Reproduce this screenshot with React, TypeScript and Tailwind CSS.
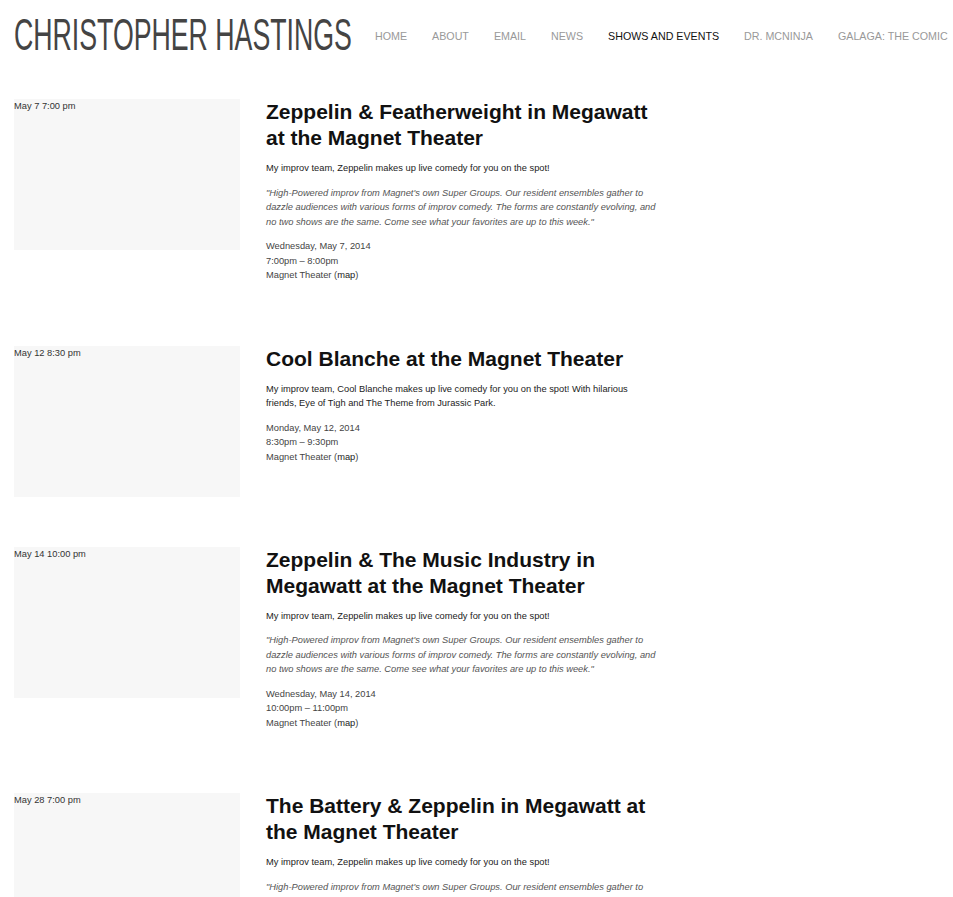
const nav = ['Home', 'About', 'Email', 'News', 'Shows and Events', 'Dr. McNinja', 'Galaga: The Comic'];

const magnetBlurb =
  '"High-Powered improv from Magnet\'s own Super Groups. Our resident ensembles gather to dazzle audiences with various forms of improv comedy. The forms are constantly evolving, and no two shows are the same. Come see what your favorites are up to this week."';

type Show = {
  when: string;
  title: string;
  blurb: string;
  quote?: string;
  day: string;
  time: string;
};

const shows: Show[] = [
  {
    when: 'May 7 7:00 pm',
    title: 'Zeppelin & Featherweight in Megawatt at the Magnet Theater',
    blurb: 'My improv team, Zeppelin makes up live comedy for you on the spot!',
    quote: magnetBlurb,
    day: 'Wednesday, May 7, 2014',
    time: '7:00pm – 8:00pm',
  },
  {
    when: 'May 12 8:30 pm',
    title: 'Cool Blanche at the Magnet Theater',
    blurb:
      'My improv team, Cool Blanche makes up live comedy for you on the spot! With hilarious friends, Eye of Tigh and The Theme from Jurassic Park.',
    day: 'Monday, May 12, 2014',
    time: '8:30pm – 9:30pm',
  },
  {
    when: 'May 14 10:00 pm',
    title: 'Zeppelin & The Music Industry in Megawatt at the Magnet Theater',
    blurb: 'My improv team, Zeppelin makes up live comedy for you on the spot!',
    quote: magnetBlurb,
    day: 'Wednesday, May 14, 2014',
    time: '10:00pm – 11:00pm',
  },
  {
    when: 'May 28 7:00 pm',
    title: 'The Battery & Zeppelin in Megawatt at the Magnet Theater',
    blurb: 'My improv team, Zeppelin makes up live comedy for you on the spot!',
    quote: magnetBlurb,
    day: 'Wednesday, May 28, 2014',
    time: '7:00pm – 8:00pm',
  },
];

const Event = ({ show }: { show: Show }) => (
  <div className="mb-[50px] flex items-start">
    <div className="h-[151px] w-[226px] shrink-0 bg-[#f7f7f7] text-[9.3px] leading-[14px] text-[#333]">
      {show.when}
    </div>
    <div className="ml-[26px] w-[393px] pb-[13px] text-[9.3px] leading-[14.5px]">
      <h2 className="mb-[10px] text-[21px] font-bold leading-[26px] text-[#111]">{show.title}</h2>
      <p className="mb-[10px] text-[#222]">{show.blurb}</p>
      {show.quote && <p className="mb-[10px] italic text-[#555]">{show.quote}</p>}
      <div className="mt-[3px] text-[#444]">
        <div>{show.day}</div>
        <div>{show.time}</div>
        <div>
          Magnet Theater (<span className="text-[#222]">map</span>)
        </div>
      </div>
    </div>
  </div>
);

export default function App() {
  return (
    <div className="h-[897px] overflow-hidden bg-white px-[14px] font-['Liberation_Sans',Arial,sans-serif]">
      <header className="flex h-[70px] items-center">
        <h1 className="w-[338px] shrink-0 whitespace-nowrap text-[44px] font-normal uppercase leading-none text-[#444]">
          <span className="inline-block origin-left scale-x-[0.607]">Christopher Hastings</span>
        </h1>
        <nav className="ml-[23px] flex shrink-0 gap-[25px] whitespace-nowrap pt-[2px] text-[10.7px] uppercase">
          {nav.map((n) => (
            <span key={n} className={n === 'Shows and Events' ? 'text-[#111]' : 'text-[#999]'}>
              {n}
            </span>
          ))}
        </nav>
      </header>
      <main className="mt-[29px]">
        {shows.map((s) => (
          <Event key={s.when} show={s} />
        ))}
      </main>
    </div>
  );
}
